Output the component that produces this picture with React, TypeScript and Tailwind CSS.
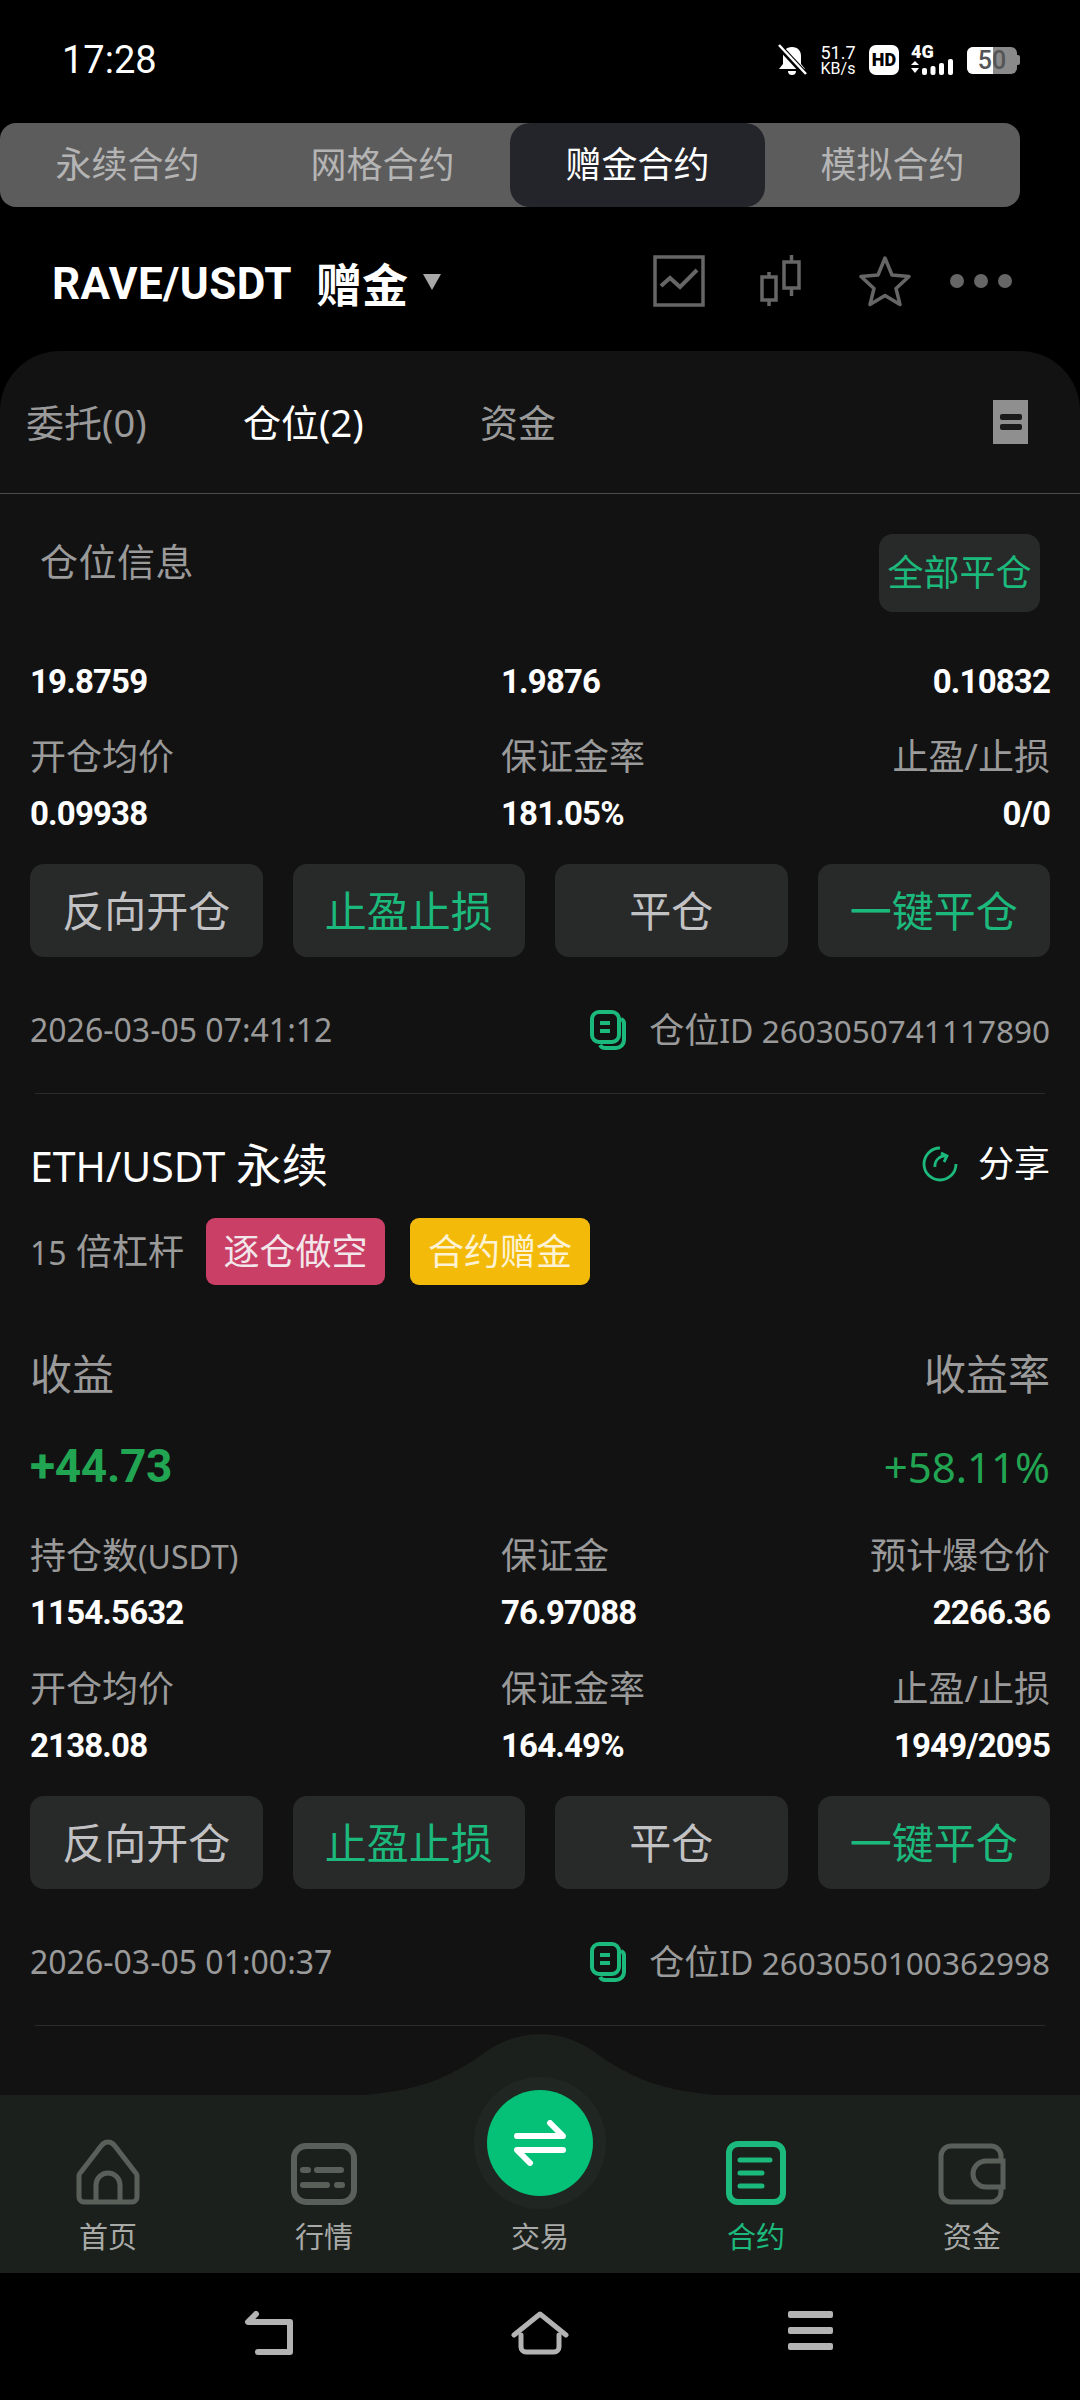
import React from 'react';

const cjk = 'font-["Noto_Sans","Noto_Sans_CJK_SC",sans-serif]';
const num = 'font-["Roboto","Noto_Sans_CJK_SC",sans-serif]';

const StatusBar = () => (
  <div className="h-[123px] shrink-0 flex items-start justify-between pl-[62px] pr-[60px] pt-[38px]">
    <span className={`${num} text-[38px] leading-[44px] text-white`}>17:28</span>
    <div className="flex items-center gap-[12px] h-[40px] mt-[2px]">
      <svg width="30" height="32" viewBox="0 0 30 32" aria-hidden="true">
        <path d="M15 3c-6 0-9 4-9 9v8l-4 5h26l-4-5v-8c0-5-3-9-9-9z M11 27a4 4 0 0 0 8 0z" fill="#fff" />
        <path d="M1 1 L29 31" stroke="#000" strokeWidth="6" />
        <path d="M2 1 L29 30" stroke="#fff" strokeWidth="2.5" />
      </svg>
      <div className="flex flex-col items-center text-white font-['Roboto',sans-serif] text-[16px] leading-[15px] w-[38px]">
        <span className="text-[18px] leading-[17px]">51.7</span>
        <span>KB/s</span>
      </div>
      <div className="w-[30px] h-[30px] rounded-[7px] bg-white flex items-center justify-center font-['Roboto',sans-serif] font-black text-[18px] leading-none text-black">HD</div>
      <div className="w-[44px] h-[32px] flex flex-col">
        <span className="font-['Roboto',sans-serif] font-black text-[18px] leading-[15px] text-white">4G</span>
        <svg width="44" height="17" viewBox="0 0 44 17" aria-hidden="true">
          <path d="M4 2l4 4H0z M0 9h8l-4 5z" fill="#fff" />
          <rect x="11" y="9" width="5" height="7" rx="2" fill="#fff" />
          <rect x="19.500" y="7" width="5" height="9" rx="2" fill="#fff" />
          <rect x="28" y="4" width="5" height="12" rx="2" fill="#fff" />
          <rect x="37" y="0" width="5" height="16" rx="2" fill="#fff" />
        </svg>
      </div>
      <div className="flex items-center">
        <div className="relative w-[50px] h-[27px] rounded-[6px] bg-[#8a8a8a] overflow-hidden">
          <div className="w-[26px] h-full bg-white" />
          <span className="absolute inset-0 flex items-center justify-center font-['Roboto',sans-serif] font-medium text-[25px] leading-none text-[#555]">50</span>
        </div>
        <span className="w-[3px] h-[10px] rounded-r-[2px] bg-[#8a8a8a]" />
      </div>
    </div>
  </div>
);

const productTabs = ['永续合约', '网格合约', '赠金合约', '模拟合约'];

const ProductTabs = () => (
  <div className={`w-[1020px] h-[84px] shrink-0 rounded-[16px] bg-[#5c5c5c] grid grid-cols-4 ${cjk}`}>
    {productTabs.map((t, i) => (
      <div
        key={t}
        className={`flex items-center justify-center text-[36px] rounded-[20px] ${i === 2 ? 'bg-[#24252a] text-white' : 'text-[#b4b4b4]'}`}
      >
        {t}
      </div>
    ))}
  </div>
);

const PairHeader = () => (
  <div className="h-[144px] shrink-0 flex items-center pl-[52px] pr-[68px] pt-[10px]">
    <span className={`${num} font-bold text-[44px] tracking-[0.4px] text-white`}>RAVE/USDT</span>
    <span className={`${cjk} font-bold text-[46px] text-white ml-[24px]`}>赠金</span>
    <svg className="ml-[14px] mt-[-4px]" width="20" height="18" viewBox="0 0 20 18" aria-hidden="true">
      <path d="M1 1h18l-9 16z" fill="#a8a8a8" />
    </svg>
    <div className="ml-auto flex items-center mt-[-6px]">
      <svg width="52" height="52" viewBox="0 0 52 52" fill="none" stroke="#666" strokeWidth="3.5" aria-hidden="true">
        <rect x="2" y="2" width="48" height="48" />
        <path d="M8 31l9-8 10 9 17-17" strokeWidth="4" />
      </svg>
      <svg className="ml-[53px]" width="44" height="52" viewBox="0 0 44 52" fill="none" stroke="#666" strokeWidth="3.5" aria-hidden="true">
        <rect x="4" y="22" width="14" height="23" />
        <path d="M11 17v5M11 45v6" />
        <rect x="26" y="7" width="15" height="26" />
        <path d="M33.500 0v7M33.500 33v8" />
      </svg>
      <svg className="ml-[57px]" width="52" height="52" viewBox="0 0 52 52" fill="none" stroke="#666" strokeWidth="3.5" strokeLinejoin="round" aria-hidden="true">
        <path d="M26 3l7 17 17 1.500-13 12 4 16-15-9-15 9 4-16-13-12 17-1.500z" />
      </svg>
      <div className="ml-[39px] flex gap-[10px]">
        <span className="w-[14px] h-[14px] rounded-full bg-[#666]" />
        <span className="w-[14px] h-[14px] rounded-full bg-[#666]" />
        <span className="w-[14px] h-[14px] rounded-full bg-[#666]" />
      </div>
    </div>
  </div>
);

const OrderTabs = () => (
  <div className={`h-[143px] shrink-0 flex items-center border-b border-[#4a4a4a] pl-[26px] pr-[52px] text-[38px] ${cjk}`}>
    <span className="w-[217px] text-[#9a9a9a]">委托(0)</span>
    <span className="w-[237px] text-white">仓位(2)</span>
    <span className="text-[#9a9a9a]">资金</span>
    <div className="ml-auto w-[35px] h-[44px] bg-[#8f8f8f] flex flex-col items-center justify-center gap-[4px]">
      <span className="w-[22px] h-[6px] rounded-[2px] bg-[#1a1a1a]" />
      <span className="w-[22px] h-[6px] rounded-[2px] bg-[#1a1a1a]" />
    </div>
  </div>
);

type Cell = { label?: React.ReactNode; value: string };

const StatRow = ({ cells }: { cells: Cell[] }) => (
  <div className="grid grid-cols-[471px_1fr_auto]">
    {cells.map((c, i) => (
      <div key={c.value} className={i === 2 ? 'text-right' : ''}>
        {c.label && <div className={`${cjk} h-[44px] leading-[44px] text-[36px] text-[#9a9a9a] mb-[15px]`}>{c.label}</div>}
        <div className={`${num} font-bold h-[40px] leading-[40px] text-[33px] tracking-[-0.85px] text-white`}>{c.value}</div>
      </div>
    ))}
  </div>
);

const actions = [
  { text: '反向开仓', green: false },
  { text: '止盈止损', green: true },
  { text: '平仓', green: false },
  { text: '一键平仓', green: true },
];

const ActionButtons = () => (
  <div className={`grid grid-cols-4 gap-[30px] mt-[30px] ${cjk}`}>
    {actions.map((a) => (
      <div
        key={a.text}
        className={`h-[93px] rounded-[14px] bg-[#282929] flex items-center justify-center text-[42px] ${a.green ? 'text-[#1cb97d]' : 'text-[#c2c2c4]'}`}
      >
        {a.text}
      </div>
    ))}
  </div>
);

const IdIcon = () => (
  <svg width="36" height="40" viewBox="0 0 36 40" fill="none" stroke="#1cb97d" strokeWidth="4" aria-hidden="true">
    <path d="M9 2h13a7 7 0 0 1 7 7v16a7 7 0 0 1-7 7H9a7 7 0 0 1-7-7V9a7 7 0 0 1 7-7z" />
    <path d="M31 9a5 5 0 0 1 3 5v16a8 8 0 0 1-8 8H15a6 6 0 0 1-5-3" />
    <path d="M10 13h10M10 21h10" strokeWidth="4" />
  </svg>
);

const MetaRow = ({ time, id }: { time: string; id: string }) => (
  <div className={`${cjk} h-[40px] mt-[53px] flex items-center justify-between text-[32px] text-[#9a9a9a]`}>
    <span>{time}</span>
    <div className="flex items-center">
      <IdIcon />
      <span className="ml-[23px]"><span className="text-[35px]">仓位</span>ID <span className="text-[31.5px]">{id}</span></span>
    </div>
  </div>
);

const Divider = ({ className }: { className: string }) => <div className={`h-px mx-[5px] bg-[#2a2b2b] ${className}`} />;

const FirstPosition = () => (
  <div>
    <div className="flex items-start justify-between pt-[40px] pl-[10px]">
      <span className={`${cjk} text-[38px] leading-[54px] tracking-[0.5px] text-[#9a9a9a]`}>仓位信息</span>
      <div className={`${cjk} w-[161px] h-[78px] mr-[10px] rounded-[14px] bg-[#282929] flex items-center justify-center text-[36px] text-[#1cb97d]`}>全部平仓</div>
    </div>
    <div className="mt-[50px]">
      <StatRow cells={[{ value: '19.8759' }, { value: '1.9876' }, { value: '0.10832' }]} />
    </div>
    <div className="mt-[33px]">
      <StatRow
        cells={[
          { label: '开仓均价', value: '0.09938' },
          { label: '保证金率', value: '181.05%' },
          { label: '止盈/止损', value: '0/0' },
        ]}
      />
    </div>
    <ActionButtons />
    <MetaRow time="2026-03-05 07:41:12" id="2603050741117890" />
    <Divider className="mt-[43px]" />
  </div>
);

const SecondPosition = () => (
  <div>
    <div className={`${cjk} h-[50px] mt-[45px] flex items-center justify-between`}>
      <span className="text-[41px] text-white">ETH/USDT <span className="text-[46px]">永续</span></span>
      <div className="flex items-center">
        <svg width="36" height="36" viewBox="0 0 36 36" fill="none" stroke="#1cb97d" strokeWidth="2.800" aria-hidden="true">
          <path d="M18 2a16 16 0 1 0 16 16" />
          <path d="M13 21a10 10 0 0 1 11-11M19 7l6 3-3 6" />
        </svg>
        <span className="ml-[20px] text-[36px] text-white">分享</span>
      </div>
    </div>
    <div className={`${cjk} flex items-center h-[67px] mt-[29px]`}>
      <span className="text-[36px] text-[#9a9a9a] w-[176px]"><span className="text-[32px]">15</span> 倍杠杆</span>
      <span className="w-[179px] h-full rounded-[9px] bg-[#c93f66] flex items-center justify-center text-[36px] text-[#f2e6ea]">逐仓做空</span>
      <span className="ml-[25px] w-[180px] h-full rounded-[9px] bg-[#f3ba0a] flex items-center justify-center text-[36px] text-[#fdf3d4]">合约赠金</span>
    </div>
    <div className={`${cjk} h-[50px] mt-[63px] flex items-center justify-between text-[42px] text-[#9a9a9a]`}>
      <span>收益</span>
      <span>收益率</span>
    </div>
    <div className="h-[50px] mt-[43px] flex items-center justify-between text-[#22a552]">
      <span className={`${num} font-bold text-[46px] tracking-[-0.3px]`}>+44.73</span>
      <span className={`${cjk} text-[42px]`}>+58.11%</span>
    </div>
    <div className="mt-[43px]">
      <StatRow
        cells={[
          { label: <>持仓数<span className="text-[32px]">(USDT)</span></>, value: '1154.5632' },
          { label: '保证金', value: '76.97088' },
          { label: '预计爆仓价', value: '2266.36' },
        ]}
      />
    </div>
    <div className="mt-[34px]">
      <StatRow
        cells={[
          { label: '开仓均价', value: '2138.08' },
          { label: '保证金率', value: '164.49%' },
          { label: '止盈/止损', value: '1949/2095' },
        ]}
      />
    </div>
    <ActionButtons />
    <MetaRow time="2026-03-05 01:00:37" id="2603050100362998" />
    <Divider className="mt-[43px]" />
  </div>
);

const HomeIcon = () => (
  <svg width="66" height="66" viewBox="0 0 66 66" fill="none" stroke="#596059" strokeWidth="5" strokeLinejoin="round" aria-hidden="true">
    <path d="M33 3C28 3 26 7 23 11L6 33a6 6 0 0 0-2 5v20a5 5 0 0 0 5 5h48a5 5 0 0 0 5-5V38a6 6 0 0 0-2-5L43 11C40 7 38 3 33 3z" />
    <path d="M21 63V46a12 12 0 0 1 24 0v17" />
  </svg>
);

const MarketIcon = () => (
  <svg width="66" height="62" viewBox="0 0 66 62" fill="none" stroke="#596059" aria-hidden="true">
    <rect x="3" y="3" width="60" height="56" rx="12" strokeWidth="6" />
    <path d="M12 27h5M26 27h24M12 42h24M46 42h5" strokeWidth="6" strokeLinecap="round" />
  </svg>
);

const ContractIcon = () => (
  <svg width="60" height="64" viewBox="0 0 60 64" fill="none" stroke="#1cb97d" aria-hidden="true">
    <rect x="3" y="3" width="54" height="58" rx="9" strokeWidth="6" />
    <path d="M14 19h30M14 32h22M14 45h22" strokeWidth="5" strokeLinecap="round" />
  </svg>
);

const WalletIcon = () => (
  <svg width="68" height="62" viewBox="0 0 68 62" fill="none" stroke="#596059" strokeWidth="5" aria-hidden="true">
    <path d="M63 18V13A10 10 0 0 0 53 3H13A10 10 0 0 0 3 13v36a10 10 0 0 0 10 10h40a10 10 0 0 0 10-10v-5" />
    <path d="M65 18H48a13 13 0 0 0 0 26h17z" />
  </svg>
);

const NavItem = ({ icon, label, active }: { icon?: React.ReactNode; label: string; active?: boolean }) => (
  <div className="flex-1 flex flex-col items-center justify-end pb-[18px]">
    {icon && <div className="h-[66px] flex items-end mb-[14px]">{icon}</div>}
    <span className={`${cjk} text-[29px] leading-[36px] ${active ? 'text-[#1cb97d]' : 'text-[#a8aaa8]'}`}>{label}</span>
  </div>
);

const BottomNav = () => (
  <div className="relative h-[178px] shrink-0 bg-[#1c201c] flex">
    {/* hump behind the trade button */}
    <svg className="absolute left-[330px] top-[-61px]" width="420" height="62" viewBox="0 0 420 62" aria-hidden="true">
      <path d="M0 62C70 62 110 50 150 22C185 -7 235 -7 270 22C310 50 350 62 420 62z" fill="#1c201c" />
    </svg>
    <div className="absolute left-1/2 top-[-18px] -translate-x-1/2 w-[132px] h-[132px] rounded-full bg-[#202722] flex items-center justify-center">
      <div className="w-[106px] h-[106px] rounded-full bg-[#04c177] flex items-center justify-center">
        <svg width="52" height="46" viewBox="0 0 52 46" fill="none" stroke="#fff" strokeWidth="6" strokeLinecap="round" strokeLinejoin="round" aria-hidden="true">
          <path d="M3 16h46L36 3" />
          <path d="M49 30H3l13 13" />
        </svg>
      </div>
    </div>
    <div className="relative flex w-full">
      <NavItem icon={<HomeIcon />} label="首页" />
      <NavItem icon={<MarketIcon />} label="行情" />
      <NavItem label="交易" />
      <NavItem icon={<ContractIcon />} label="合约" active />
      <NavItem icon={<WalletIcon />} label="资金" />
    </div>
  </div>
);

const SystemNav = () => (
  <div className="h-[127px] shrink-0 bg-black grid grid-cols-[270px_270px_270px] justify-center justify-items-center items-start pt-[38px]">
    <svg width="52" height="44" viewBox="0 0 52 44" fill="none" stroke="#b3b3b3" strokeWidth="6" strokeLinecap="round" strokeLinejoin="round" aria-hidden="true">
      <path d="M12 3L4 11h42v30H14" />
    </svg>
    <svg width="58" height="44" viewBox="0 0 58 44" fill="none" stroke="#b3b3b3" strokeWidth="5" strokeLinecap="round" strokeLinejoin="round" aria-hidden="true">
      <path d="M3 24L29 3l26 21" />
      <path d="M10 24v12a5 5 0 0 0 5 5h28a5 5 0 0 0 5-5V24" />
    </svg>
    <div className="w-[45px] flex flex-col gap-[9px]">
      <span className="h-[7px] rounded-[2px] bg-[#b3b3b3]" />
      <span className="h-[7px] rounded-[2px] bg-[#b3b3b3]" />
      <span className="h-[7px] rounded-[2px] bg-[#b3b3b3]" />
    </div>
  </div>
);

export default function App() {
  return (
    <div className="w-[1080px] h-[2400px] bg-black flex flex-col overflow-hidden">
      <StatusBar />
      <ProductTabs />
      <PairHeader />
      <main className="flex-1 min-h-0 rounded-t-[60px] bg-[#121213] overflow-hidden">
        <OrderTabs />
        <div className="px-[30px]">
          <FirstPosition />
          <SecondPosition />
        </div>
      </main>
      <BottomNav />
      <SystemNav />
    </div>
  );
}
